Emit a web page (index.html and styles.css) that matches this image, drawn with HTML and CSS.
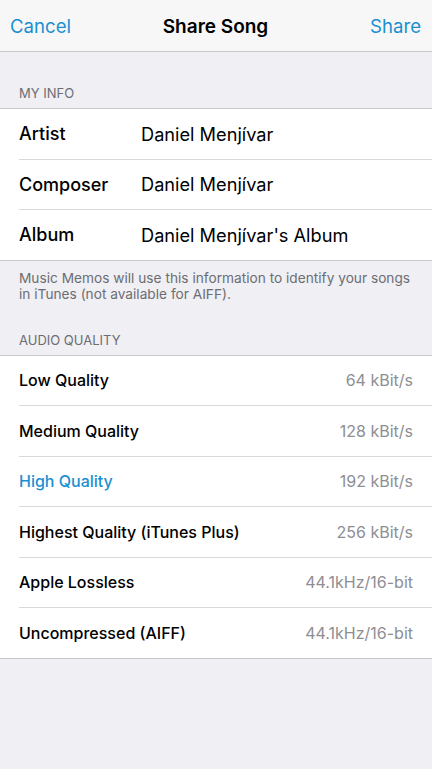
FILE: index.html
```html
<!DOCTYPE html>
<html lang="en">
<head>
    <meta charset="UTF-8">
    <meta name="viewport" content="width=device-width, initial-scale=1.0">
    <title>Share Song</title>
    <link rel="stylesheet" href="styles.css">
</head>
<body>
    <header class="navbar">
        <span class="nav-btn">Cancel</span>
        <span class="nav-title">Share Song</span>
        <span class="nav-btn right">Share</span>
    </header>

    <div class="section-header first">MY INFO</div>
    <div class="group">
        <div class="row info-row">
            <span class="info-label">Artist</span>
            <span class="info-value">Daniel Menjívar</span>
        </div>
        <div class="row info-row">
            <span class="info-label">Composer</span>
            <span class="info-value">Daniel Menjívar</span>
        </div>
        <div class="row info-row">
            <span class="info-label">Album</span>
            <span class="info-value">Daniel Menjívar's Album</span>
        </div>
    </div>
    <p class="section-footer">Music Memos will use this information to identify your songs in iTunes (not available for AIFF).</p>

    <div class="section-header">AUDIO QUALITY</div>
    <div class="group">
        <div class="row quality-row">
            <span class="quality-label">Low Quality</span>
            <span class="quality-value">64 kBit/s</span>
        </div>
        <div class="row quality-row">
            <span class="quality-label">Medium Quality</span>
            <span class="quality-value">128 kBit/s</span>
        </div>
        <div class="row quality-row selected">
            <span class="quality-label">High Quality</span>
            <span class="quality-value">192 kBit/s</span>
        </div>
        <div class="row quality-row">
            <span class="quality-label">Highest Quality (iTunes Plus)</span>
            <span class="quality-value">256 kBit/s</span>
        </div>
        <div class="row quality-row">
            <span class="quality-label">Apple Lossless</span>
            <span class="quality-value">44.1kHz/16-bit</span>
        </div>
        <div class="row quality-row">
            <span class="quality-label">Uncompressed (AIFF)</span>
            <span class="quality-value">44.1kHz/16-bit</span>
        </div>
    </div>
</body>
</html>
```

FILE: styles.css
```css
body {
    margin: 0;
    font-family: Inter, "Liberation Sans", Arial, sans-serif;
    background-color: #efeff4;
    color: #000;
    min-height: 769px;
}
.navbar {
    height: 52px;
    box-sizing: border-box;
    background-color: #f7f7f8;
    border-bottom: 1px solid #c8c7cc;
    display: grid;
    grid-template-columns: 1fr auto 1fr;
    align-items: center;
    padding: 1px 11px 0 10px;
}
.nav-btn {
    color: #1a8fd0;
    font-size: 18.6px;
}
.nav-btn.right {
    text-align: right;
}
.nav-title {
    font-size: 19px;
    font-weight: 600;
}
.section-header {
    font-size: 13px;
    color: #6d6d72;
    padding: 0 19px 7px;
    margin-top: 30px;
    line-height: 16px;
}
.section-header.first {
    margin-top: 33px;
}
.group {
    background-color: #fff;
    border-top: 1px solid #c8c7cc;
    border-bottom: 1px solid #c8c7cc;
}
.row {
    height: 49.5px;
    display: flex;
    align-items: center;
    margin-left: 19px;
    padding-right: 19px;
    border-bottom: 1px solid #d9d9dc;
}
.row:last-child {
    border-bottom: none;
}
.info-label {
    width: 122px;
    font-size: 18px;
    font-weight: 500;
}
.info-value {
    font-size: 18.2px;
}
.quality-row {
    justify-content: space-between;
}
.quality-label {
    font-size: 16px;
    font-weight: 500;
}
.quality-value {
    font-size: 16px;
    color: #8e8e93;
}
.selected .quality-label {
    color: #1a8fd0;
}
.section-footer {
    margin: 0;
    padding: 9px 19px 0;
    font-size: 13.7px;
    line-height: 16px;
    color: #6d6d72;
}
```
